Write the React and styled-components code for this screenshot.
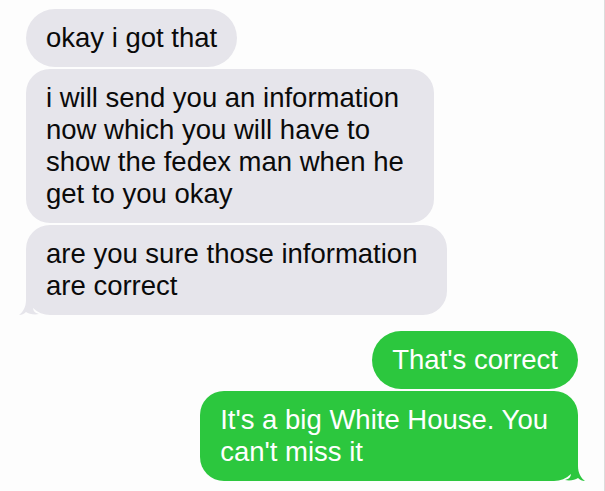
import React from 'react';
import styled, { createGlobalStyle } from 'styled-components';

const GlobalStyle = createGlobalStyle`
  html, body {
    margin: 0;
    padding: 0;
    background: #fdfdfd;
  }
  body {
    font-family: "Liberation Sans", Arial, sans-serif;
  }
`;

const messages = [
  { from: 'them', lines: ['okay i got that'] },
  {
    from: 'them',
    lines: [
      'i will send you an information',
      'now which you will have to',
      'show the fedex man when he',
      'get to you okay',
    ],
  },
  { from: 'them', lines: ['are you sure those information', 'are correct'], tail: true },
  { from: 'me', lines: ["That's correct"], gapBefore: 14 },
  { from: 'me', lines: ["It's a big White House. You", "can't miss it"], tail: true },
];

const Thread = styled.div`
  box-sizing: border-box;
  width: 605px;
  height: 491px;
  padding: 9px 26px 0 26px;
  display: flex;
  flex-direction: column;
  gap: 2px;
  border-right: 1px solid #dcdcdc;
  overflow: hidden;
`;

const Row = styled.div`
  display: flex;
  justify-content: ${(p) => (p.$mine ? 'flex-end' : 'flex-start')};
  margin-top: ${(p) => p.$gap || 0}px;
`;

const Bubble = styled.div`
  position: relative;
  box-sizing: border-box;
  padding: ${(p) => (p.$multi ? '13px 30px 13px 20px' : '13px 20px')};
  border-radius: ${(p) => (p.$multi ? '24px' : '29px')};
  background: ${(p) => (p.$mine ? '#2cc73e' : '#e6e5eb')};
  color: ${(p) => (p.$mine ? '#ffffff' : '#0a0a0a')};
  font-size: 27.5px;
  line-height: 32px;
  white-space: nowrap;
`;

const Tail = styled.svg`
  position: absolute;
  bottom: 0;
  width: 24px;
  height: 24px;
  ${(p) => (p.$mine ? 'right: -7px; transform: scaleX(-1);' : 'left: -7px;')}
`;

const BubbleTail = ({ mine }) => (
  <Tail $mine={mine} viewBox="0 0 24 24">
    <path
      d="M7 0 L14 0 L14 16 C14 20 16 22 20 23 C15 24 10 23 7 21 C5 23 3 24 0 24 C4 21 7 16 7 9 Z"
      fill={mine ? '#2cc73e' : '#e6e5eb'}
    />
  </Tail>
);

const Message = ({ from, lines, tail, gapBefore }) => {
  const mine = from === 'me';
  return (
    <Row $mine={mine} $gap={gapBefore}>
      <Bubble $mine={mine} $multi={lines.length > 1}>
        {lines.map((line, i) => (
          <div key={i}>{line}</div>
        ))}
        {tail && <BubbleTail mine={mine} />}
      </Bubble>
    </Row>
  );
};

export default function App() {
  return (
    <>
      <GlobalStyle />
      <Thread>
        {messages.map((m, i) => (
          <Message key={i} {...m} />
        ))}
      </Thread>
    </>
  );
}
